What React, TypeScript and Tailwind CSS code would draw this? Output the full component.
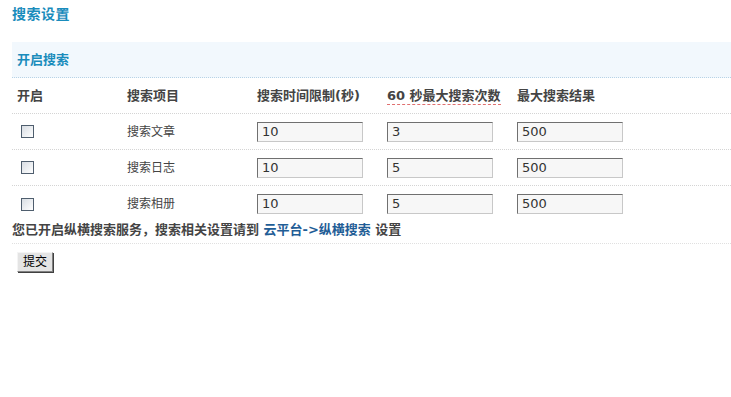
import React from 'react';

const rows = [
  { name: '搜索文章', time: '10', count: '3', max: '500' },
  { name: '搜索日志', time: '10', count: '5', max: '500' },
  { name: '搜索相册', time: '10', count: '5', max: '500' },
];

const font = { fontFamily: '"DejaVu Sans", "Noto Sans CJK SC", sans-serif' };

export default function App() {
  return (
    <div className="w-[731px] h-[397px] bg-white text-[#333] pl-3" style={font}>
      {/* Title */}
      <h2 className="pt-[6px] h-[42px] text-[14px] font-bold leading-[16px] text-[#1a8cbc] tracking-[0.5px]">
        搜索设置
      </h2>

      {/* Panel header */}
      <div className="h-[36px] bg-[#f2f8fd] border-b border-dotted border-[#b8d3e6] pl-[5px] flex items-center">
        <span className="text-[13px] font-bold text-[#1a8cbc]">开启搜索</span>
      </div>

      {/* Column header */}
      <div className="flex h-[36px] items-center border-b border-dotted border-[#d4d4d4] text-[13px] font-bold text-[#444]">
        <div className="w-[110px] pl-[5px]">开启</div>
        <div className="w-[130px] pl-[5px]">搜索项目</div>
        <div className="w-[130px] pl-[5px]">搜索时间限制(秒)</div>
        <div className="w-[130px] pl-[5px]">
          <span className="border-b border-dashed border-[#e07070] pb-[1px]">60 秒最大搜索次数</span>
        </div>
        <div className="pl-[5px]">最大搜索结果</div>
      </div>

      {rows.map((r, i) => (
        <SearchRow key={r.name} row={r} last={i === rows.length - 1} />
      ))}

      {/* Notice */}
      <div className="h-[22px] leading-[15px] border-b border-dotted border-[#e0e0e0] text-[13px] font-bold text-[#444]">
        您已开启纵横搜索服务，搜索相关设置请到&nbsp;
        <a href="#" className="text-[#1f5d96]">云平台-&gt;纵横搜索</a>
        &nbsp;设置
      </div>

      <div className="flex pt-[8px] pl-[5px]">
        <button className="h-[20px] px-[5px] text-[12px] leading-none text-black bg-[#e4e4e4] border border-t-[#f4f4f4] border-l-[#f4f4f4] border-r-[#808080] border-b-[#808080] shadow-[1px_1px_0_#404040]">
          提交
        </button>
      </div>
    </div>
  );
}

interface SearchRowProps {
  row: { name: string; time: string; count: string; max: string };
  last: boolean;
}

const SearchRow: React.FC<SearchRowProps> = ({ row, last }) => {
  return (
    <div
      className={
        last
          ? 'flex h-[36px] items-center text-[12px]'
          : 'flex h-[36px] items-center text-[12px] border-b border-dotted border-[#d4d4d4]'
      }
    >
      <div className="w-[110px] pl-[9px]">
        <span className="block w-[13px] h-[13px] border border-[#4f5e6e] bg-gradient-to-br from-[#d8dde3] to-white" />
      </div>
      <div className="w-[130px] pl-[5px] text-[#444]">{row.name}</div>
      <div className="w-[130px] pl-[5px]">
        <Field value={row.time} />
      </div>
      <div className="w-[130px] pl-[5px]">
        <Field value={row.count} />
      </div>
      <div className="pl-[5px]">
        <Field value={row.max} />
      </div>
    </div>
  );
};

const Field: React.FC<{ value: string }> = ({ value }) => (
  <div className="w-[106px] h-[20px] bg-[#f7f7f7] border border-t-[#707070] border-l-[#707070] border-r-[#c8c8c8] border-b-[#c8c8c8] pl-[4px] text-[13px] leading-[18px] text-[#333]">
    {value}
  </div>
);
